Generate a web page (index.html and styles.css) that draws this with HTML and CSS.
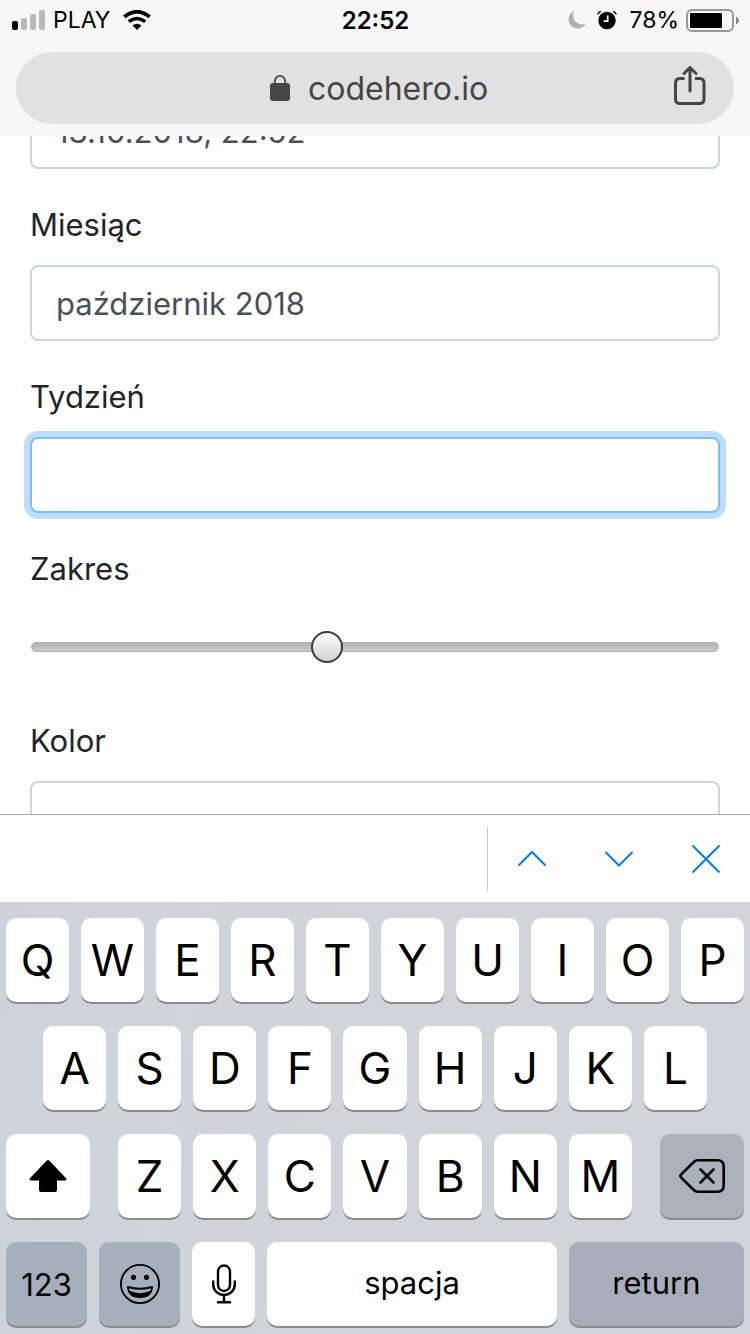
FILE: index.html
```html
<!DOCTYPE html>
<html lang="pl">
<head>
    <meta charset="UTF-8">
    <meta name="viewport" content="width=device-width, initial-scale=1.0">
    <title>codehero.io</title>
    <link rel="stylesheet" href="styles.css">
</head>
<body>
    <header class="browser">
        <div class="status">
            <div class="status-left">
                <svg width="34" height="20" viewBox="0 0 34 20">
                    <rect x="0" y="11" width="6" height="9" rx="2"/>
                    <g fill="#b9b9b9">
                        <rect x="9" y="8" width="6" height="12" rx="2"/>
                        <rect x="18" y="4" width="6" height="16" rx="2"/>
                        <rect x="27" y="0" width="6" height="20" rx="2"/>
                    </g>
                </svg>
                <span>PLAY</span>
                <svg class="wifi" width="28" height="20" viewBox="0 0 28 20">
                    <g fill="none" stroke="#000">
                        <path d="M1.3 6.800Q14-3.300 26.700 6.800" stroke-width="3.800"/>
                        <path d="M5.800 11.700Q14 5.300 22.200 11.700" stroke-width="3.600"/>
                    </g>
                    <path d="M9.500 15.500Q14 12 18.500 15.500L14 20Z"/>
                </svg>
            </div>
            <time class="clock">22:52</time>
            <div class="status-right">
                <svg width="18" height="18" viewBox="0 0 18 18">
                    <path d="M6 0A9.200 9.200 0 1 0 18 12.500C9.500 16 2.500 8 6 0Z" fill="#b0b0b0"/>
                </svg>
                <svg class="alarm" width="20" height="20" viewBox="0 0 20 20">
                    <circle cx="10" cy="10.500" r="8.700"/>
                    <path d="M.3 4.800Q.5 1 4.600 1L3.600 2.300Q2.200 3.200 1.400 4.600ZM19.700 4.800Q19.500 1 15.400 1L16.400 2.300Q17.800 3.200 18.600 4.600Z"/>
                    <path d="M10.700 5.500V11.200H6.500" fill="none" stroke="#f7f7f7" stroke-width="1.700"/>
                </svg>
                <span>78%</span>
                <svg width="53" height="23" viewBox="0 0 53 23">
                    <rect x="1" y="1" width="46" height="21" rx="5" fill="none" stroke="#999" stroke-width="2"/>
                    <rect x="4" y="4" width="32" height="15" rx="1"/>
                    <path d="M50 7.500Q53 9 53 11.500T50 15.500Z" fill="#888"/>
                </svg>
            </div>
        </div>
        <div class="address">
            <a class="url" href="#">
                <svg width="20" height="26" viewBox="0 0 20 26">
                    <rect x="0" y="8" width="20" height="18" rx="3" fill="#454545"/>
                    <path d="M4.800 10V6.500A5.200 5.600 0 0 1 15.200 6.500V10" fill="none" stroke="#454545" stroke-width="1.800"/>
                </svg>
                codehero.io
            </a>
            <button class="share" type="button" aria-label="Udostępnij">
                <svg width="32" height="40" viewBox="0 0 32 40" fill="none" stroke="#454545" stroke-width="3" stroke-linecap="round" stroke-linejoin="round">
                    <path d="M10.500 12.500H6Q1.500 12.500 1.500 17V33Q1.500 37.500 6 37.500H25.500Q30 37.500 30 33V17Q30 12.500 25.500 12.500H21" stroke-linecap="butt"/>
                    <path d="M16 25V1.500M10 7.500L16 1.500L22 7.500"/>
                </svg>
            </button>
        </div>
    </header>

    <main class="page">
        <form class="form">
            <div class="form-group">
                <input class="form-control" id="datetime" type="text" value="13.10.2018, 22:52" aria-label="Data i czas">
            </div>
            <div class="form-group">
                <label for="month">Miesiąc</label>
                <input class="form-control" id="month" type="text" value="październik 2018">
            </div>
            <div class="form-group">
                <label for="week">Tydzień</label>
                <input class="form-control active" id="week" type="text">
            </div>
            <div class="form-group">
                <label for="range">Zakres</label>
                <input class="form-range" id="range" type="range" min="0" max="100" step="0.1" value="42.7">
            </div>
            <div class="form-group">
                <label for="color">Kolor</label>
                <input class="form-control" id="color" type="text">
            </div>
        </form>
    </main>

    <nav class="toolbar">
        <div class="toolbar-buttons">
            <button type="button" aria-label="Poprzednie">
                <svg width="30" height="30" viewBox="0 0 30 30"><path d="M1.500 21.500L15 8L28.500 21.500"/></svg>
            </button>
            <button type="button" aria-label="Następne">
                <svg width="30" height="30" viewBox="0 0 30 30"><path d="M1.500 8L15 21.500L28.500 8"/></svg>
            </button>
            <button type="button" aria-label="Zamknij">
                <svg width="30" height="30" viewBox="0 0 30 30"><path d="M1.500 1.500L28.500 28.500M28.500 1.500L1.500 28.500"/></svg>
            </button>
        </div>
    </nav>

    <section class="keyboard">
        <div class="row">
            <button class="key">Q</button>
            <button class="key">W</button>
            <button class="key">E</button>
            <button class="key">R</button>
            <button class="key">T</button>
            <button class="key">Y</button>
            <button class="key">U</button>
            <button class="key">I</button>
            <button class="key">O</button>
            <button class="key">P</button>
        </div>
        <div class="row row-middle">
            <button class="key">A</button>
            <button class="key">S</button>
            <button class="key">D</button>
            <button class="key">F</button>
            <button class="key">G</button>
            <button class="key">H</button>
            <button class="key">J</button>
            <button class="key">K</button>
            <button class="key">L</button>
        </div>
        <div class="row">
            <button class="key shift" aria-label="Shift">
                <svg width="38" height="32" viewBox="0 0 38 32">
                    <path d="M17.800.5Q19-.5 20.200.5L37.300 18.500Q38 20.400 36 20.500H28V30Q28 32 26 32H12Q10 32 10 30V20.500H2Q0 20.400.7 18.500Z"/>
                </svg>
            </button>
            <button class="key">Z</button>
            <button class="key">X</button>
            <button class="key">C</button>
            <button class="key">V</button>
            <button class="key">B</button>
            <button class="key">N</button>
            <button class="key">M</button>
            <button class="key delete" aria-label="Usuń">
                <svg width="46" height="34" viewBox="0 0 46 34" fill="none" stroke="#000" stroke-width="2.600" stroke-linecap="round" stroke-linejoin="round">
                    <path d="M19 1.300H38.500Q44.700 1.300 44.700 7.500V26.500Q44.700 32.700 38.500 32.700H19Q16.500 32.700 14.800 31L2 18.300Q.8 17 2 15.700L14.800 3Q16.500 1.300 19 1.300Z"/>
                    <path d="M21.500 10.500L34.500 23.500M34.500 10.500L21.500 23.500"/>
                </svg>
            </button>
        </div>
        <div class="row">
            <button class="key numbers">123</button>
            <button class="key emoji" aria-label="Emoji">
                <svg width="40" height="40" viewBox="0 0 40 40">
                    <circle cx="20" cy="20" r="19.100" fill="none" stroke="#000" stroke-width="1.800"/>
                    <circle cx="13.500" cy="13.300" r="2.600"/>
                    <circle cx="26.500" cy="13.300" r="2.600"/>
                    <path d="M7.800 22.700Q20 26.300 32.200 22.700Q31.500 33.200 20 33.200T7.800 22.700Z" stroke="#000" stroke-width="1.600" stroke-linejoin="round"/>
                    <path d="M9 24.200Q20 27.400 31 24.200L30.400 26.800Q20 31.500 9.600 26.800Z" fill="#a6b0bd"/>
                </svg>
            </button>
            <button class="key" aria-label="Dyktowanie">
                <svg width="24" height="40" viewBox="0 0 24 40" fill="none" stroke="#000" stroke-width="2.400" stroke-linecap="round">
                    <rect x="6" y="1.500" width="12" height="25.500" rx="6"/>
                    <path d="M1.200 17.500V20.500A10.800 10.500 0 0 0 22.800 20.500V17.500M12 31V38M6 38.300H18"/>
                </svg>
            </button>
            <button class="key space">spacja</button>
            <button class="key return">return</button>
        </div>
    </section>
</body>
</html>
```
FILE: styles.css
```css
* {
    box-sizing: border-box;
}
body {
    display: flex;
    flex-direction: column;
    height: 100vh;
    margin: 0;
    background: #fff;
    color: #212529;
    font-family: Inter, "Liberation Sans", sans-serif;
    font-size: 31px;
}
button {
    padding: 0;
    border: none;
    background: none;
    color: #000;
    font-family: inherit;
}
svg {
    display: block;
}

/* status bar and address */
.browser {
    background: #f7f7f7;
    padding: 0 16px 12px;
}
.status {
    display: grid;
    grid-template-columns: 1fr auto 1fr;
    align-items: center;
    height: 40px;
    margin: 0 -5px 12px -4px;
    color: #000;
    font-size: 23px;
}
.status-left,
.status-right {
    display: flex;
    align-items: center;
    gap: 7px;
}
.status-right {
    justify-content: flex-end;
}
.wifi {
    margin-left: 6px;
}
.alarm {
    margin: 0 5px 0 4px;
}
.clock {
    font-size: 24px;
    font-weight: 600;
}
.address {
    display: grid;
    grid-template-columns: 1fr auto 1fr;
    align-items: center;
    height: 72px;
    padding: 0 28px 0 36px;
    border-radius: 36px;
    background: #e1e1e1;
}
.url {
    display: flex;
    grid-column: 2;
    align-items: center;
    gap: 18px;
    color: #454545;
    font-size: 32px;
    text-decoration: none;
}
.share {
    justify-self: end;
    padding-bottom: 4px;
}

/* form */
.page {
    flex: 1;
    min-height: 0;
    overflow: hidden;
    padding: 0 30px;
}
.form {
    margin-top: -43px;
}
.form-group {
    margin-bottom: 32px;
}
.form-group label {
    display: block;
    margin-bottom: 16px;
    line-height: 48px;
}
.form-control {
    display: block;
    width: 100%;
    height: 76px;
    padding: 0 24px;
    border: 2px solid #ced4da;
    border-radius: 8px;
    background: #fff;
    color: #495057;
    font-family: inherit;
    font-size: 31px;
}
.form-control.active {
    border-color: #80bdff;
    box-shadow: 0 0 0 6px #bfdeff;
}
.form-range {
    display: block;
    width: 100%;
    height: 76px;
    margin: 0;
    background: none;
    -webkit-appearance: none;
    appearance: none;
}
.form-range::-webkit-slider-runnable-track {
    height: 10px;
    margin: 0 1px;
    border: 1px solid #b0b0b0;
    border-radius: 5px;
    background: linear-gradient(#b2b2b2, #cacaca);
}
.form-range::-webkit-slider-thumb {
    width: 32px;
    height: 32px;
    margin-top: -12px;
    border: 2px solid #3c3c3c;
    border-radius: 50%;
    background: linear-gradient(#fdfdfd, #d2d2d2);
    -webkit-appearance: none;
}

/* bar above the keyboard */
.toolbar {
    display: flex;
    align-items: center;
    justify-content: flex-end;
    height: 88px;
    border-top: 1px solid #a3a5a9;
    background: #fff;
}
.toolbar-buttons {
    display: flex;
    width: 263px;
    height: 64px;
    border-left: 1px solid #c8c8cc;
}
.toolbar-buttons button {
    display: flex;
    flex: 1;
    align-items: center;
    justify-content: center;
}
.toolbar-buttons path {
    fill: none;
    stroke: #007aff;
    stroke-width: 2;
}

/* keyboard */
.keyboard {
    display: flex;
    flex-direction: column;
    gap: 24px;
    padding: 16px 6px 8px;
    background: linear-gradient(100deg, #ced2dc, #d1d5d9 50%, #d1d4da);
}
.row {
    display: flex;
    gap: 12px;
}
.row-middle {
    padding: 0 37px;
}
.key {
    display: flex;
    flex: 63 1 0;
    align-items: center;
    justify-content: center;
    min-width: 0;
    height: 84px;
    border-radius: 10px;
    background: #fff;
    box-shadow: 0 2px 0 #898a8d;
    font-size: 44px;
}
.shift {
    flex-grow: 84;
    margin-right: 16px;
}
.delete {
    flex-grow: 84;
    margin-left: 16px;
    background: #abb1bb;
}
.numbers,
.emoji {
    flex-grow: 81;
    background: #a6b0bd;
}
.space {
    flex-grow: 289;
}
.return {
    flex-grow: 175;
    background: #a8adb9;
}
.numbers,
.space,
.return {
    font-size: 31px;
}
.space,
.return {
    padding-bottom: 4px;
}
```
